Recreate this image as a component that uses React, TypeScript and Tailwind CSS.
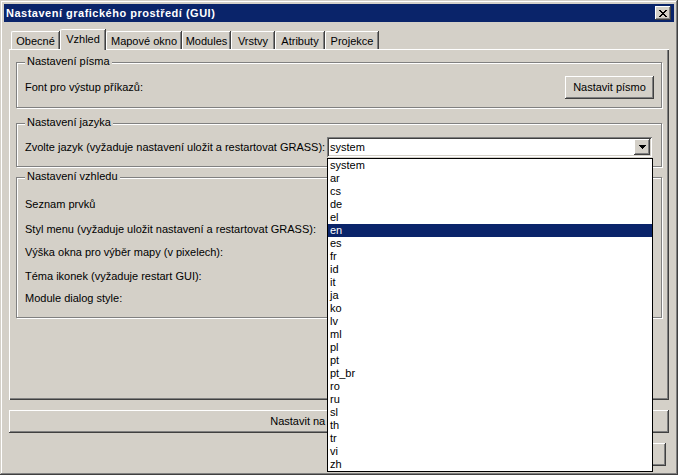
import React from "react";

const raised =
  "bg-[#d4d0c8] shadow-[inset_-1px_-1px_0_#404040,inset_1px_1px_0_#ffffff,inset_-2px_-2px_0_#808080]";

const tabs = [
  { name: "Obecné", w: "w-[48px]" },
  { name: "Vzhled", w: "w-[45px]", active: true },
  { name: "Mapové okno", w: "w-[75px]" },
  { name: "Modules", w: "w-[48px]" },
  { name: "Vrstvy", w: "w-[43px]" },
  { name: "Atributy", w: "w-[49px]" },
  { name: "Projekce", w: "w-[53px]" },
];

const languages = [
  "system", "ar", "cs", "de", "el", "en", "es", "fr", "id", "it", "ja", "ko",
  "lv", "ml", "pl", "pt", "pt_br", "ro", "ru", "sl", "th", "tr", "vi", "zh",
];

// rows of "Nastavení vzhledu" – margin above each label
const lookRows = [
  { text: "Seznam prvků", mt: "mt-[20px]" },
  { text: "Styl menu (vyžaduje uložit nastavení a restartovat GRASS):", mt: "mt-[12px]" },
  { text: "Výška okna pro výběr mapy (v pixelech):", mt: "mt-[10px]" },
  { text: "Téma ikonek (vyžaduje restart GUI):", mt: "mt-[11px]" },
  { text: "Module dialog style:", mt: "mt-[9px]" },
];

function CloseGlyph() {
  const rows = [
    "XX....XX",
    ".XX..XX.",
    "..XXXX..",
    "...XX...",
    "..XXXX..",
    ".XX..XX.",
    "XX....XX",
  ];
  return (
    <svg width="8" height="7" viewBox="0 0 8 7" shapeRendering="crispEdges">
      {rows.flatMap((r, y) =>
        r.split("").map((c, x) => (c === "X" ? <rect key={`${x}-${y}`} x={x} y={y} width="1" height="1" fill="#000" /> : null))
      )}
    </svg>
  );
}

function ArrowGlyph() {
  return (
    <svg width="7" height="4" viewBox="0 0 7 4" shapeRendering="crispEdges">
      <rect x="0" y="0" width="7" height="1" fill="#000" />
      <rect x="1" y="1" width="5" height="1" fill="#000" />
      <rect x="2" y="2" width="3" height="1" fill="#000" />
      <rect x="3" y="3" width="1" height="1" fill="#000" />
    </svg>
  );
}

function GroupBox({ title, className, children }: { title: string; className: string; children?: React.ReactNode }) {
  return (
    <div
      className={`relative border border-[#808080] shadow-[1px_1px_0_#ffffff,inset_1px_1px_0_#ffffff] ${className}`}
    >
      <span className="absolute left-[8px] top-[-8px] bg-[#d4d0c8] px-[2px] leading-[13px]">{title}</span>
      {children}
    </div>
  );
}

export default function App() {
  return (
    <div className="relative w-[678px] h-[475px] overflow-hidden bg-[#d4d0c8] p-[4px] flex flex-col text-[11px] leading-[13px] text-black font-['Liberation_Sans',Arial,sans-serif] shadow-[inset_-1px_-1px_0_#404040,inset_1px_1px_0_#d4d0c8,inset_-2px_-2px_0_#808080,inset_2px_2px_0_#ffffff]">
      {/* title bar */}
      <div className="h-[18px] bg-[#0a246a] flex items-center justify-between pl-[2px] pr-[3px]">
        <span className="text-white font-bold text-[11px] tracking-[0.5px]">Nastavení grafického prostředí (GUI)</span>
        <div className={`w-[16px] h-[14px] flex items-center justify-center ${raised}`}>
          <CloseGlyph />
        </div>
      </div>

      <div className="px-[5px] mt-[7px]">
        {/* tab strip */}
        <div className="relative z-10 h-[20px] flex items-end pl-[2px]">
          {tabs.map((t, i) =>
            t.active ? (
              <div
                key={t.name}
                className={`${t.w} ml-[1px] h-[21px] -mb-[1px] bg-[#d4d0c8] border-l border-t border-white rounded-tl-[2px] shadow-[inset_-1px_0_0_#808080,1px_0_0_#404040] flex items-center justify-center pb-[2px]`}
              >
                {t.name}
              </div>
            ) : (
              <div
                key={t.name}
                className={`${t.w} ${i > 0 ? "ml-[1px]" : ""} h-[18px] border-l border-t border-white rounded-tl-[2px] shadow-[inset_-1px_0_0_#808080,1px_0_0_#404040] flex items-center justify-center pt-[1px]`}
              >
                {t.name}
              </div>
            )
          )}
        </div>

        {/* tab page */}
        <div className="h-[351px] pt-[13px] px-[7px] shadow-[inset_1px_1px_0_#ffffff,inset_-1px_-1px_0_#404040,inset_-2px_-2px_0_#808080]">
          <GroupBox title="Nastavení písma" className="h-[46px] pt-[13px] pl-[8px] pr-[7px]">
            <div className="flex items-center justify-between">
              <span>Font pro výstup příkazů:</span>
              <div className={`w-[89px] h-[23px] flex items-center justify-center ${raised}`}>Nastavit písmo</div>
            </div>
          </GroupBox>

          <GroupBox title="Nastavení jazyka" className="mt-[15px] h-[44px] pt-[13px] pl-[8px] pr-[9px]">
            <div className="flex items-center justify-between">
              <span>Zvolte jazyk (vyžaduje nastavení uložit a restartovat GRASS):</span>
              <div className="relative z-20 w-[325px] h-[20px] bg-white flex items-center p-[2px] shadow-[inset_1px_1px_0_#808080,inset_-1px_-1px_0_#ffffff,inset_2px_2px_0_#404040,inset_-2px_-2px_0_#d4d0c8]">
                <span className="flex-1 pl-[1px]">system</span>
                <div className={`w-[16px] h-[16px] flex items-center justify-center ${raised}`}>
                  <ArrowGlyph />
                </div>
                {/* open list */}
                <div className="absolute left-0 top-[21px] w-[326px] bg-white border border-black">
                  {languages.map((l) => (
                    <div
                      key={l}
                      className={`h-[13px] leading-[13px] pl-[2px] ${l === "en" ? "bg-[#0a246a] text-white" : ""}`}
                    >
                      {l}
                    </div>
                  ))}
                </div>
              </div>
            </div>
          </GroupBox>

          <GroupBox title="Nastavení vzhledu" className="mt-[10px] h-[141px] pl-[8px] flex flex-col">
            {lookRows.map((r) => (
              <span key={r.text} className={r.mt}>
                {r.text}
              </span>
            ))}
          </GroupBox>
        </div>

        <div className={`mt-[10px] h-[23px] flex items-center justify-center ${raised}`}>Nastavit na výchozí hodnoty</div>
      </div>

      <div className="mt-[10px] flex justify-end gap-[6px] pr-[8px]">
        <div className={`w-[75px] h-[23px] flex items-center justify-center ${raised}`}>Uložit</div>
        <div className={`w-[75px] h-[23px] flex items-center justify-center ${raised}`}>Použít</div>
        <div className={`w-[75px] h-[23px] flex items-center justify-center ${raised}`}>Zavřít</div>
      </div>
    </div>
  );
}
